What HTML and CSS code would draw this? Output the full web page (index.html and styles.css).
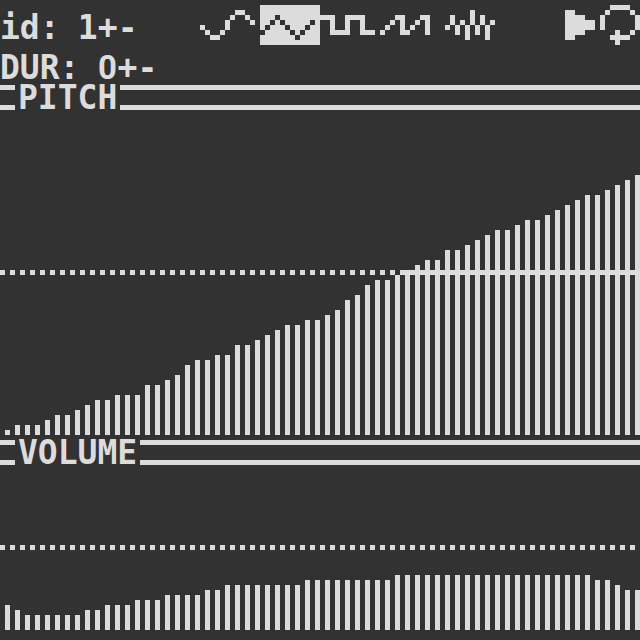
FILE: index.html
```html
<!DOCTYPE html>
<html lang="en">
<head>
<meta charset="utf-8">
<title>Sound editor</title>
<link rel="stylesheet" href="styles.css">
</head>
<body>
<main class="editor">
  <header class="toolbar">
    <div class="stepper">
      <label class="name" for="sound-id">id:</label>
      <output class="value" id="sound-id">1</output>
      <button class="step" type="button" aria-label="Next sound">+</button>
      <button class="step" type="button" aria-label="Previous sound">-</button>
    </div>
    <div class="waves">
      <button class="tool" type="button" aria-label="Sine wave">
        <svg class="icon" width="60" height="40" viewBox="0 0 12 8"><path d="M0 4h1v1H0zM1 5h1v1H1zM2 6h2v1H2zM4 5h1v1H4zM5 3h1v2H5zM6 2h1v1H6zM7 1h2v1H7zM9 2h1v1H9zM10 3h1v1h-1z"/></svg>
      </button>
      <button class="tool selected" type="button" aria-label="Triangle wave" aria-pressed="true">
        <svg class="icon" width="60" height="40" viewBox="0 0 12 8"><path d="M0 5h1v1H0zM1 4h1v1H1zM2 3h1v1H2zM3 2h1v1H3zM4 3h1v1H4zM5 4h1v1H5zM6 5h1v1H6zM7 6h1v1H7zM8 5h1v1H8zM9 4h1v1H9zM10 3h1v1h-1z"/></svg>
      </button>
      <button class="tool" type="button" aria-label="Square wave">
        <svg class="icon" width="60" height="40" viewBox="0 0 12 8"><path d="M0 2h3v3h2V2h4v3h2v1H8V3H6v3H2V3H0z"/></svg>
      </button>
      <button class="tool" type="button" aria-label="Saw wave">
        <svg class="icon" width="60" height="40" viewBox="0 0 12 8"><path d="M0 5h1v1H0zM1 4h1v1H1zM2 3h1v1H2zM3 2h2v3h1v1H4V3H3zM6 4h1v1H6zM7 3h1v1H7zM8 2h2v4H9V3H8z"/></svg>
      </button>
      <button class="tool" type="button" aria-label="Noise">
        <svg class="icon" width="60" height="40" viewBox="0 0 12 8"><path d="M1 4h1v1H1zM2 2h1v2H2zM3 4h1v2H3zM4 3h1v1H4zM5 4h1v3H5zM6 1h1v3H6zM7 4h1v2H7zM8 2h1v2H8zM9 4h1v3H9zM10 3h1v1h-1z"/></svg>
      </button>
    </div>
    <div class="playback">
      <button class="tool" type="button" aria-label="Play">
        <svg class="icon" width="40" height="40" viewBox="0 0 8 8"><path d="M1 1h2v1h2v1h2v2H5v1H3v1H1z"/></svg>
      </button>
      <button class="tool" type="button" aria-label="Loop">
        <svg class="icon" width="40" height="40" viewBox="0 0 8 8"><path d="M2 0h4v1H2zM1 1h1v1H1zM6 1h1v1H6zM0 2h1v3H0zM7 2h1v3H7zM6 5h1v1H6zM2 6h1V5h1v1h2v1H4v1H3V7H2z"/></svg>
      </button>
    </div>
  </header>

  <div class="stepper duration">
    <label class="name" for="sound-length">DUR:</label>
    <output class="value plain-zero" id="sound-length">0</output>
    <button class="step" type="button" aria-label="Longer">+</button>
    <button class="step" type="button" aria-label="Shorter">-</button>
  </div>

  <section>
    <h2 class="heading">PITCH</h2>
    <div class="chart pitch" data-values="1 2 2 2 3 4 4 5 6 7 7 8 8 8 10 10 11 12 14 15 15 16 16 18 18 19 20 21 22 22 23 23 24 25 27 28 30 31 31 32 33 34 35 35 37 37 38 39 40 41 41 42 43 43 44 45 46 47 48 48 49 50 51 52"></div>
  </section>

  <section>
    <h2 class="heading">VOLUME</h2>
    <div class="chart volume" data-values="5 4 3 3 3 3 3 3 4 4 5 5 5 6 6 6 7 7 7 7 8 8 9 9 9 9 9 9 9 9 10 10 10 10 10 10 10 10 10 11 11 11 11 11 11 11 11 11 11 11 11 11 11 11 11 11 11 11 11 10 10 9 8 8"></div>
  </section>
</main>
<script src="charts.js"></script>
</body>
</html>
```

FILE: styles.css
```css
:root {
  --ink: #dcdcdc;
  --paper: #323232;
  --unit: 5px;
}

*,
*::before,
*::after {
  box-sizing: border-box;
}

body {
  margin: 0;
  background: var(--paper);
  color: var(--ink);
  font: bold 33px/25px "DejaVu Sans Mono", monospace;
}

button {
  padding: 0;
  border: 0;
  background: none;
  color: inherit;
  font: inherit;
}

.editor {
  padding: 5px 0 10px;
}

.toolbar {
  display: grid;
  grid-template-columns: 200px 1fr auto;
  align-items: start;
}

.toolbar .stepper {
  padding-top: 10px;
}

.stepper {
  display: flex;
}

.duration {
  margin: 10px 0 5px;
}

.name {
  margin-right: 18px;
}

.value,
.step {
  display: flex;
  justify-content: center;
  width: 20px;
  height: 25px;
}

.plain-zero {
  font-family: Roboto, sans-serif;
}

.waves,
.playback {
  display: flex;
}

.tool {
  display: block;
}

.selected {
  background: var(--ink);
  color: var(--paper);
}

.icon {
  display: block;
  fill: currentColor;
  shape-rendering: crispEdges;
}

.heading {
  display: flex;
  gap: 3px;
  margin: 0;
  font-size: 33px;
}

.heading::before,
.heading::after {
  content: "";
  height: 25px;
  border: solid var(--ink);
  border-width: 5px 0;
}

.heading::before {
  width: 15px;
}

.heading::after {
  flex: 1;
}

.chart {
  position: relative;
  display: grid;
  grid-template-columns: repeat(64, 1fr);
  align-items: end;
}

.pitch {
  height: 325px;
  margin-bottom: 5px;
}

.volume {
  height: 165px;
}

.chart::after {
  content: "";
  position: absolute;
  left: 0;
  right: 0;
  height: 5px;
  background: repeating-linear-gradient(90deg, var(--ink) 0 5px, transparent 5px 10px);
}

.pitch::after {
  bottom: 160px;
}

.volume::after {
  bottom: 80px;
}

.bar {
  height: calc(var(--level) * var(--unit));
  margin-left: 50%;
  background: var(--ink);
}
```

FILE: charts.js
```js
document.querySelectorAll(".chart").forEach((chart) => {
  chart.dataset.values.split(" ").forEach((level) => {
    const bar = document.createElement("div");
    bar.className = "bar";
    bar.style.setProperty("--level", level);
    chart.append(bar);
  });
});
```
